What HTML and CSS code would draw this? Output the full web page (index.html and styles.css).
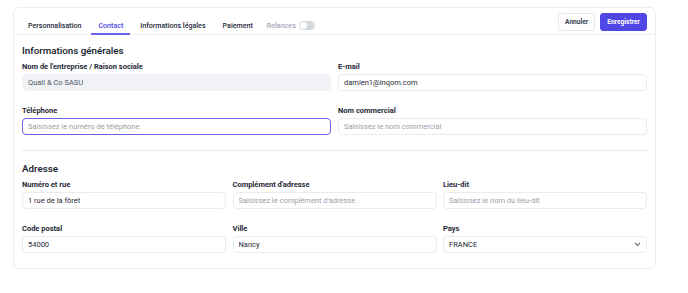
FILE: index.html
```html
<!DOCTYPE html>
<html lang="fr">
  <head>
    <meta charset="UTF-8" />
    <meta name="viewport" content="width=device-width, initial-scale=1.0" />
    <title>Contact</title>
    <link rel="stylesheet" href="styles.css">
  </head>
  <body>
    <div class="card">
      <!-- onglets + actions -->
      <div class="head">
        <ul class="tabs">
          <li>Personnalisation</li>
          <li class="active">Contact</li>
          <li>Informations légales</li>
          <li>Paiement</li>
          <li class="muted">Relances <span class="toggle"></span></li>
        </ul>
        <div class="actions">
          <button class="btn">Annuler</button>
          <button class="btn primary">Enregistrer</button>
        </div>
      </div>

      <div class="body">
        <h2>Informations générales</h2>
        <div class="grid two">
          <div class="field">
            <label>Nom de l'entreprise / Raison sociale</label>
            <input type="text" class="locked" value="Quali &amp; Co SASU" />
          </div>
          <div class="field">
            <label>E-mail</label>
            <input type="text" value="damien1@inqom.com" />
          </div>
          <div class="field">
            <label>Téléphone</label>
            <input type="text" class="focus" placeholder="Saisissez le numéro de téléphone" />
          </div>
          <div class="field">
            <label>Nom commercial</label>
            <input type="text" placeholder="Saisissez le nom commercial" />
          </div>
        </div>

        <hr />

        <h2>Adresse</h2>
        <div class="grid three">
          <div class="field">
            <label>Numéro et rue</label>
            <input type="text" value="1 rue de la fôret" />
          </div>
          <div class="field">
            <label>Complément d'adresse</label>
            <input type="text" placeholder="Saisissez le complément d'adresse" />
          </div>
          <div class="field">
            <label>Lieu-dit</label>
            <input type="text" placeholder="Saisissez le nom du lieu-dit" />
          </div>
          <div class="field">
            <label>Code postal</label>
            <input type="text" value="54000" />
          </div>
          <div class="field">
            <label>Ville</label>
            <input type="text" value="Nancy" />
          </div>
          <div class="field">
            <label>Pays</label>
            <div class="select">
              FRANCE
              <svg width="7" height="5" viewBox="0 0 7 5"><path d="M1 1l2.5 2.5 2.5-2.5" fill="none" stroke="#6b7280" stroke-width="1.1" /></svg>
            </div>
          </div>
        </div>
      </div>
    </div>
  </body>
</html>
```

FILE: styles.css
```css
* {
  box-sizing: border-box;
  margin: 0;
  padding: 0;
}
body {
  font-family: Roboto, "Noto Sans", sans-serif;
  color: #1f2937;
  background: #fff;
  padding: 7px 32px 0 13px;
}
.card {
  width: 643px;
  border: 1px solid #eceef2;
  border-radius: 6px;
  background: #fff;
}

/* en-tête */
.head {
  display: flex;
  justify-content: space-between;
  align-items: center;
  height: 27px;
  padding: 0 8px 0 7px;
  border-bottom: 1px solid #eceef2;
}
.tabs {
  display: flex;
  gap: 3px;
  list-style: none;
  align-self: flex-end;
}
.tabs li {
  display: flex;
  align-items: center;
  gap: 3px;
  padding: 0 7px;
  height: 18px;
  font-size: 7.1px;
  font-weight: 500;
  color: #1f2937;
  border-bottom: 2px solid transparent;
  margin-bottom: -1px;
}
.tabs li.active {
  color: #5046e5;
  border-bottom-color: #6b63e8;
}
.tabs li.muted {
  color: #a3a8b3;
  margin-left: -3px;
}
.toggle {
  position: relative;
  width: 16px;
  height: 9px;
  border-radius: 5px;
  background: #d5d9e0;
}
.toggle::after {
  content: "";
  position: absolute;
  left: 1px;
  top: 1px;
  width: 7px;
  height: 7px;
  border-radius: 50%;
  background: #fff;
}
.actions {
  display: flex;
  gap: 5px;
  margin-top: 2px;
}
.btn {
  height: 18px;
  padding: 0 6px;
  font-family: inherit;
  font-size: 6.6px;
  font-weight: 700;
  color: #374151;
  background: #fff;
  border: 1px solid #e5e7eb;
  border-radius: 3px;
}
.btn.primary {
  background: #4f46e5;
  border-color: #4f46e5;
  color: #fff;
}

/* contenu */
.body {
  padding: 9px 8px 15px 8px;
}
h2 {
  font-size: 9.8px;
  font-weight: 500;
  line-height: 14px;
  color: #111827;
  margin-bottom: 4px;
}
.grid {
  display: grid;
  row-gap: 15px;
}
.grid.two {
  grid-template-columns: 1fr 1fr;
  column-gap: 7px;
}
.grid.three {
  grid-template-columns: 1fr 1fr 1fr;
  column-gap: 6.5px;
}
.field {
  display: flex;
  flex-direction: column;
  gap: 2px;
}
label {
  font-size: 7.5px;
  font-weight: 700;
  line-height: 10px;
  color: #1f2937;
}
input,
.select {
  height: 17px;
  padding: 0 5px;
  font-family: inherit;
  font-size: 7.5px;
  color: #1f2937;
  background: #fff;
  border: 1px solid #e9ebef;
  border-radius: 4px;
  outline: none;
}
input::placeholder {
  color: #9aa0ab;
}
input.locked {
  background: #f1f3f6;
  border-color: #f1f3f6;
  color: #4b5563;
}
input.focus {
  border: 1.5px solid #6a62e6;
}
.select {
  display: flex;
  align-items: center;
  justify-content: space-between;
}
hr {
  border: none;
  border-top: 1px solid #e7e9ed;
  margin: 15px 0 11px;
}
```
